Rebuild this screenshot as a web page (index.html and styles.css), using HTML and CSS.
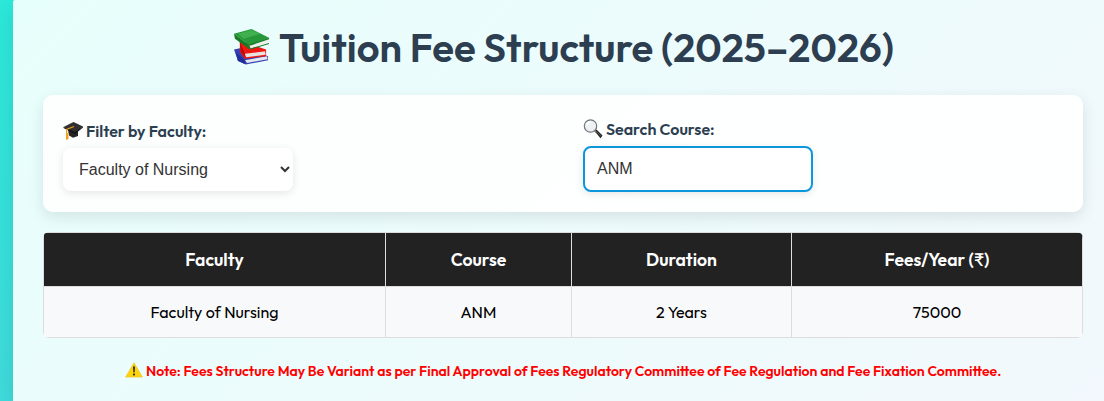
FILE: index.html
```html
<!DOCTYPE html>
<html lang="en">
<head>
<meta charset="utf-8">
<title>Tuition Fee Structure</title>
<link rel="stylesheet" href="styles.css">
</head>
<body>
<main class="container">
  <h1 class="title">
    <svg class="icon-books" viewBox="0 0 38 38">
      <path d="M1 22l10-2 25 9v4l-23 4.500-8-4z" fill="#3442b5"/>
      <path d="M12 33l23-4 .5 3-21 4z" fill="#e6e8f0"/>
      <path d="M3 25l10 9-1 3-7-3z" fill="#222e9b"/>
      <path d="M7 13l27 9v7l-22 2.500-5-7z" fill="#ef1713"/>
      <path d="M12 26.500l21-2.500.5 3.500-20 2.500z" fill="#e9e2e2"/>
      <path d="M7 14l5 12 1 4.500-5-6z" fill="#b90c0c"/>
      <path d="M1 6l18-5 18 9-20 8z" fill="#27983a"/>
      <path d="M5 6l14-4 9 4-17 5z" fill="#3fb04d"/>
      <path d="M1 6l16 12 1 4.500L2 11z" fill="#147a24"/>
      <path d="M17 18l19-7v5l-18 5z" fill="#eef0ec"/>
      <path d="M17 17l20-7v1.500l-19 6.500zM18 21l19-5.500v1l-19 5.500z" fill="#147a24"/>
    </svg>
    <span>Tuition Fee Structure (2025–2026)</span>
  </h1>

  <section class="filters">
    <div class="field">
      <label class="label label-faculty" for="faculty">
        <svg class="icon-label" viewBox="0 0 20 20">
          <path d="M5 9l10 1v5l-5 1.800-4-2.300z" fill="#242424"/>
          <path d="M.5 6L10.500 1 20 5.500 12 12z" fill="#303030"/>
          <path d="M.5 6v1l11.500 6 8-6.500v-1L12 11z" fill="#111"/>
          <path d="M11 5.500L3.500 8.500 3.800 17" fill="none" stroke="#e99a16" stroke-width="1.200"/>
          <path d="M3 12h2.300l.2 6-2.500 1z" fill="#f0a020"/>
        </svg>
        <span>Filter by Faculty:</span>
      </label>
      <select class="control select" id="faculty"><option>Faculty of Nursing</option></select>
    </div>
    <div class="field">
      <label class="label label-course" for="course">
        <svg class="icon-label" viewBox="0 0 20 20">
          <path d="M11.500 12l2-1.500 6 6-2 2.800z" fill="#222"/>
          <path d="M11 11l2.500 2.500" stroke="#777" stroke-width="1.500"/>
          <circle cx="7.500" cy="7" r="6.200" fill="#edf1f3" stroke="#70777c" stroke-width="1.200"/>
          <path d="M4 6a4 4 0 0 1 4-3" fill="none" stroke="#fff" stroke-width="1.500"/>
          <path d="M14 13l4 4" stroke="#777" stroke-width=".6"/>
        </svg>
        <span>Search Course:</span>
      </label>
      <input class="control input" id="course" type="text" value="ANM">
    </div>
  </section>

  <div class="table-wrap">
  <table class="fees">
    <colgroup><col class="col-faculty"><col class="col-course"><col class="col-duration"><col class="col-fee"></colgroup>
    <thead>
      <tr><th>Faculty</th><th>Course</th><th>Duration</th><th>Fees/Year (₹)</th></tr>
    </thead>
    <tbody>
      <tr><td>Faculty of Nursing</td><td>ANM</td><td>2 Years</td><td>75000</td></tr>
    </tbody>
  </table>
  </div>

  <p class="note">
    <svg class="icon-warning" viewBox="0 0 18 16">
      <path d="M9 .8L17.300 15H.7z" fill="#fcd40a" stroke="#f0c82c" stroke-width=".8" stroke-linejoin="round"/>
      <path d="M8 4.500h2l-.4 6H8.400z" fill="#252525"/>
      <circle cx="9" cy="12.500" r="1.100" fill="#252525"/>
    </svg>
    <span>Note: Fees Structure May Be Variant as per Final Approval of Fees Regulatory Committee of Fee Regulation and Fee Fixation Committee.</span>
  </p>
</main>
</body>
</html>
```
FILE: styles.css
```css
* { box-sizing: border-box; }
html { height: 401px; overflow: hidden; }
body {
  margin: 0;
  height: 401px;
  overflow: hidden;
  padding-left: 13px;
  background: linear-gradient(170deg, #2be8d9 0, #40dadb 410px);
  font-family: Outfit, Lato, "Noto Sans", sans-serif;
}
.container {
  width: 1100px;
  height: 401px;
  padding: 21px 30px 0;
  border-top-left-radius: 2px;
  background: linear-gradient(135deg, #e7fffc 0%, #edfbfc 55%, #f3f8fd 105%);
  box-shadow: 0 8px 20px rgba(0, 0, 0, .1);
}
.title {
  display: flex;
  align-items: center;
  gap: 9px;
  height: 52px;
  margin: 0 0 22px;
  padding-left: 190px;
  color: #2c3e50;
  font-size: 40px;
  font-weight: 600;
  line-height: 52px;
  white-space: nowrap;
}
.icon-books { width: 37px; height: 37px; margin-top: -2px; }
.filters {
  display: grid;
  grid-template-columns: 1fr 1fr;
  gap: 40px;
  height: 117px;
  padding: 20px;
  border-radius: 10px;
  background: rgba(255, 255, 255, .9);
  box-shadow: 0 5px 15px rgba(0, 0, 0, .1);
}
.field { display: flex; flex-direction: column; align-items: flex-start; }
.label {
  display: flex;
  align-items: center;
  gap: 3px;
  height: 28px;
  margin-bottom: 3px;
  color: #2c3e50;
  font-size: 16px;
  font-weight: 600;
  line-height: 20px;
  white-space: nowrap;
}
.label-faculty { height: 31px; margin-bottom: 2px; }
.icon-label { width: 20px; height: 20px; }
.label-course .icon-label { margin-top: -1px; }
.control {
  display: block;
  width: 230px;
  border-radius: 8px;
  background-color: #fff;
  color: #333;
  font: 16px "Liberation Sans", Arial, sans-serif;
  box-shadow: 0 2px 8px rgba(0, 0, 0, .1);
  outline: none;
}
.select { height: 43px; padding: 0 0 0 12px; border: 0; }
.input { height: 46px; padding: 0 12px; border: 2px solid #0c97dd; }
.table-wrap { margin-top: 20px; border-radius: 6px; overflow: hidden; }
.fees { width: 1040px; table-layout: fixed; border-collapse: collapse; text-align: center; }
.col-faculty { width: 342px; }
.col-course { width: 186px; }
.col-duration { width: 220px; }
.fees th, .fees td { padding: 0; border: 1px solid #ddd; white-space: nowrap; }
.fees th { height: 54px; background: #222; color: #fff; font-size: 17.600px; font-weight: 600; }
.fees td { height: 51px; background: #f8f9fb; color: #000; font-size: 16px; }
.note {
  display: flex;
  align-items: center;
  gap: 3px;
  height: 20px;
  margin: 23px 0 0;
  padding-left: 82px;
  color: red;
  font-size: 14px;
  font-weight: 600;
  line-height: 20px;
  white-space: nowrap;
}
.icon-warning { flex: none; width: 18px; height: 16px; margin-top: -2px; }
```
